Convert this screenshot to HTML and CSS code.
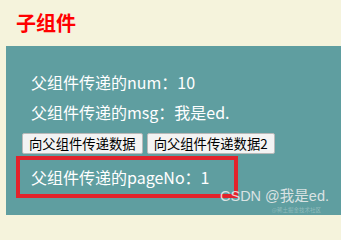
FILE: index.html
```html
<!DOCTYPE html>
<html lang="zh">
<head>
<meta charset="utf-8">
<link rel="stylesheet" href="styles.css">
</head>
<body>
<div class="page">
  <h3 class="title">子组件</h3>
  <div class="panel">
    <div class="row">父组件传递的num：10</div>
    <div class="row">父组件传递的msg：我是ed.</div>
    <div class="buttons">
      <button class="btn">向父组件传递数据</button>
      <button class="btn">向父组件传递数据2</button>
    </div>
    <div class="row row-page">父组件传递的pageNo：1<span class="mark"></span></div>
  </div>
  <div class="watermark">
    <div class="wm-main">CSDN @我是ed.</div>
    <div class="wm-sub">@稀土掘金技术社区</div>
  </div>
</div>
</body>
</html>
```

FILE: styles.css
```css
html, body {
  margin: 0;
  padding: 0;
}
html {
  background: #f5f3dc;
}
body {
  font-family: "Noto Sans CJK SC", "Noto Sans", sans-serif;
}
.page {
  position: relative;
  height: 215px;
  overflow: hidden;
}
.title {
  margin: 0;
  height: 46px;
  line-height: 46px;
  padding-left: 16px;
  font-size: 20px;
  font-weight: bold;
  color: #ff0000;
}
.panel {
  height: 169px;
  box-sizing: border-box;
  margin-left: 6px;
  background: #5f9ea0;
  padding: 25px 0 0 16px;
  color: #ffffff;
}
.row {
  font-size: 16px;
  line-height: 22px;
  padding-left: 9px;
  margin-bottom: 8px;
  white-space: nowrap;
}
.buttons {
  display: flex;
  gap: 4px;
  margin-top: 10px;
}
.btn {
  font-family: "Noto Sans CJK SC", sans-serif;
  font-size: 13.33px;
  line-height: 19px;
  padding: 0 6px;
  margin: 0;
  background: #f3f3f3;
  color: #000;
  border: 1px solid #b9b9b9;
  border-radius: 2px;
}
.row-page {
  position: relative;
  margin-top: 12px;
}
.mark {
  position: absolute;
  left: -6px;
  top: -10px;
  width: 222px;
  height: 42px;
  box-sizing: border-box;
  border: 4px solid #e2232c;
}
.watermark {
  position: absolute;
  left: 220px;
  top: 188px;
  text-align: right;
}
.wm-main {
  font-family: "Liberation Sans", "Noto Sans CJK SC", sans-serif;
  font-size: 14.5px;
  line-height: 16px;
  color: rgba(240, 240, 240, 0.85);
  white-space: nowrap;
}
.wm-sub {
  font-size: 5.5px;
  line-height: 8px;
  margin-top: 2px;
  margin-right: 8px;
  color: rgba(255, 255, 255, 0.3);
  white-space: nowrap;
}
```
